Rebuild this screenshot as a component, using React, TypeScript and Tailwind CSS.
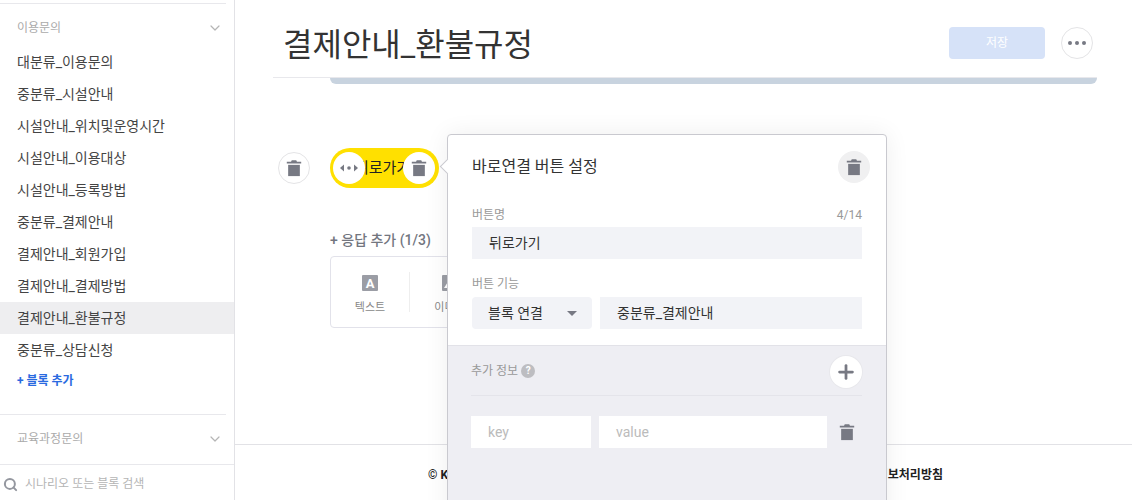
import { ChevronDown, Plus, Search } from 'lucide-react';

const blocks = [
  '대분류_이용문의',
  '중분류_시설안내',
  '시설안내_위치및운영시간',
  '시설안내_이용대상',
  '시설안내_등록방법',
  '중분류_결제안내',
  '결제안내_회원가입',
  '결제안내_결제방법',
  '결제안내_환불규정',
  '중분류_상담신청',
];

function Trash({ size = 18 }: { size?: number }) {
  return (
    <svg width={size} height={size} viewBox="0 0 20 20" fill="#777983">
      <path d="M7.5 1.5h5l.8 1.5H18v2H2V3h4.7z" />
      <path d="M3.5 6.5h13V19h-13z" />
    </svg>
  );
}

export default function App() {
  return (
    <div
      className="flex h-[500px] w-[1132px] overflow-hidden bg-white text-[#333]"
      style={{ fontFamily: 'Roboto, "Noto Sans CJK KR", sans-serif' }}
    >
      {/* Sidebar */}
      <aside className="flex w-[235px] shrink-0 flex-col border-r border-[#e2e2e6]">
        <div className="mt-[3px] mr-2 h-px bg-[#e8e8ec]" />
        <div className="flex h-[42px] items-center justify-between pt-[5px] pr-[11px] pl-[17px] text-xs text-[#aaa]">
          <span>이용문의</span>
          <ChevronDown size={16} color="#b5b5b5" strokeWidth={1.8} />
        </div>
        <ul className="text-sm text-[#444]">
          {blocks.map((name) => (
            <li
              key={name}
              className={`flex h-8 items-center pl-[17px] ${name === '결제안내_환불규정' ? 'bg-[#eeeef0]' : ''}`}
            >
              {name}
            </li>
          ))}
        </ul>
        <div className="flex h-[30px] items-center pl-[17px] text-xs font-bold text-[#2a6ae0]">+ 블록 추가</div>
        <div className="mt-[18px] mr-2 h-px bg-[#e8e8ec]" />
        <div className="flex h-[49px] items-center justify-between pr-[11px] pb-[2px] pl-[17px] text-xs text-[#aaa]">
          <span>교육과정문의</span>
          <ChevronDown size={16} color="#b5b5b5" strokeWidth={1.8} />
        </div>
        <div className="flex h-[36px] items-center gap-[7px] border-t border-[#e8e8ec] pt-[3px] pl-[3px] text-xs text-[#b5b5b5]">
          <Search size={15} color="#94979f" strokeWidth={3.2} />
          <span>시나리오 또는 블록 검색</span>
        </div>
      </aside>

      {/* Main */}
      <main className="relative flex min-w-0 flex-1 flex-col">
        <header className="mr-[35px] ml-[38px] flex h-[78px] items-center justify-between border-b border-[#e8e8ec] pt-[13px] pr-1 pl-[10px]">
          <h1 className="text-[32px] leading-none font-normal text-[#333]">결제안내_환불규정</h1>
          <div className="mb-1 flex items-center gap-4">
            <button className="h-8 w-24 rounded-sm bg-[#d6e2f8] text-xs text-white">저장</button>
            <button className="flex h-8 w-8 items-center justify-center gap-[3px] rounded-full border border-[#e4e4e6]">
              <span className="h-1 w-1 rounded-full bg-[#777983]" />
              <span className="h-1 w-1 rounded-full bg-[#777983]" />
              <span className="h-1 w-1 rounded-full bg-[#777983]" />
            </button>
          </div>
        </header>
        <div className="mr-[35px] ml-[95px] h-[6px] rounded-b-md bg-[#c8d3df]" />

        <div className="flex-1">
          <div className="mt-16 ml-[43px] flex items-center gap-5">
            <button className="flex h-8 w-8 items-center justify-center rounded-full border border-[#e4e4e6]">
              <Trash />
            </button>
            <div className="relative flex h-10 w-[109px] items-center justify-center rounded-full bg-[#ffe000] pr-1 text-[15px] text-[#222]">
              뒤로가기
              <span className="absolute top-1 left-[3px] flex h-8 w-8 items-center justify-center rounded-full bg-white">
                <svg width="20" height="10" viewBox="0 0 20 10" fill="#777983">
                  <path d="M1 5l4-3.5v7z" />
                  <circle cx="10" cy="5" r="1.8" />
                  <path d="M19 5l-4-3.5v7z" />
                </svg>
              </span>
              <span className="absolute top-1 right-[4px] flex h-8 w-8 items-center justify-center rounded-full bg-white">
                <Trash />
              </span>
            </div>
          </div>

          <div className="mt-[42px] ml-[95px] text-sm font-medium text-[#73767f]">+ 응답 추가 (1/3)</div>
          <div className="mt-[6px] ml-[95px] flex h-[72px] w-[400px] items-center rounded-sm border border-[#e2e2ea] text-[11px] text-[#888]">
            <div className="flex h-10 w-[79px] flex-col items-center gap-[9px] border-r border-[#eee] pt-[3px]">
              <span className="flex h-4 w-4 shrink-0 items-center justify-center rounded-[1px] bg-[#9b9da5] text-[13px] leading-none font-bold text-white">
                A
              </span>
              <span className="shrink-0">텍스트</span>
            </div>
            <div className="flex h-10 w-[79px] flex-col items-center gap-[9px] pt-[3px]">
              <svg width="16" height="16" viewBox="0 0 16 16" className="shrink-0">
                <rect width="16" height="16" rx="1" fill="#9b9da5" />
                <path d="M2 13l4.5-7 3 4.5 1.5-2 3 4.5z" fill="#fff" />
              </svg>
              <span className="shrink-0">이미지</span>
            </div>
          </div>
        </div>

        <footer className="flex h-[56px] items-center justify-between border-t border-[#e2e2e6] pt-1 pr-[189px] pl-[193px] text-xs font-bold text-[#222]">
          <span>© Kakao Corp.</span>
          <span>개인정보처리방침</span>
        </footer>

        {/* Popup */}
        <div className="absolute top-[134px] left-[212px] h-[400px] w-[440px] rounded-[4px] border border-[#c9c9cf] bg-white shadow-[0_0_24px_rgba(0,0,0,0.07)]">
          <span className="absolute top-[26px] left-[-6px] h-[11px] w-[11px] rotate-45 border-b border-l border-[#c9c9cf] bg-white" />
          <div className="px-6 pt-4">
            <div className="flex h-8 items-center justify-between">
              <h2 className="text-base font-normal text-[#333]">바로연결 버튼 설정</h2>
              <span className="-mr-2 flex h-8 w-8 items-center justify-center rounded-full bg-[#f0f0f1]">
                <Trash />
              </span>
            </div>
            <div className="mt-6 flex items-center justify-between text-xs text-[#999]">
              <span>버튼명</span>
              <span>4/14</span>
            </div>
            <div className="mt-1 flex h-8 w-[390px] items-center bg-[#f2f3f7] px-[17px] text-sm text-[#333]">뒤로가기</div>
            <div className="mt-[17px] text-xs text-[#999]">버튼 기능</div>
            <div className="mt-[5px] flex w-[390px] gap-2 text-sm text-[#333]">
              <div className="flex h-8 w-[120px] items-center justify-between rounded-sm bg-[#f2f3f7] pr-[15px] pl-4">
                <span>블록 연결</span>
                <span className="h-0 w-0 border-x-[5px] border-t-[5px] border-x-transparent border-t-[#777983]" />
              </div>
              <div className="flex h-8 flex-1 items-center bg-[#f2f3f7] px-[17px]">중분류_결제안내</div>
            </div>
          </div>

          <div className="mt-4 h-[200px] border-t border-[#e2e2e8] bg-[#eeeef3] pr-6 pl-[23px]">
            <div className="flex h-[50px] items-center justify-between border-b border-[#e4e4ea] pt-[3px]">
              <div className="mb-[2px] flex items-center gap-[3px] text-xs text-[#999]">
                <span>추가 정보</span>
                <span className="flex h-[14px] w-[14px] items-center justify-center rounded-full bg-[#bdbdc1] text-[10px] font-bold text-white">
                  ?
                </span>
              </div>
              <span className="flex h-8 w-8 items-center justify-center rounded-full bg-white shadow-[0_0_0_1px_#e8e8ec]">
                <Plus size={22} color="#777983" strokeWidth={3} />
              </span>
            </div>
            <div className="mt-5 flex items-center gap-2 text-sm text-[#bbb]">
              <div className="flex h-8 w-[120px] items-center bg-white px-[17px]">key</div>
              <div className="flex h-8 w-[228px] items-center bg-white px-[17px]">value</div>
              <span className="ml-[3px]">
                <Trash />
              </span>
            </div>
          </div>
        </div>
      </main>
    </div>
  );
}
